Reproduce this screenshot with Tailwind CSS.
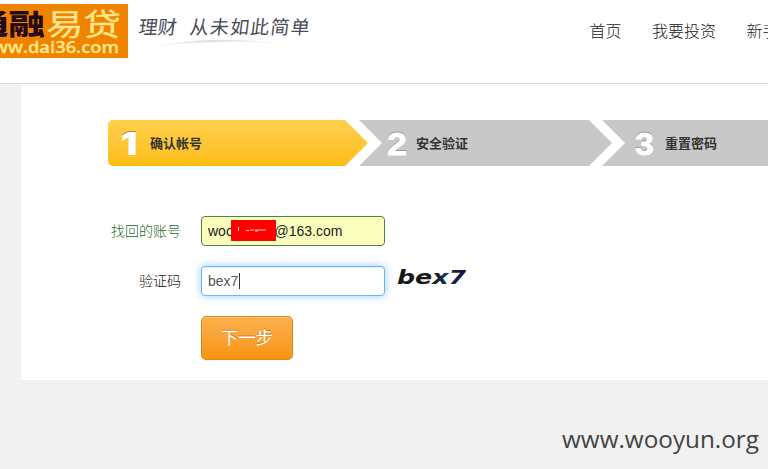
<!DOCTYPE html>
<html lang="zh-CN">
<head>
<meta charset="utf-8">
<title>找回密码</title>
<script src="https://cdn.jsdelivr.net/npm/@tailwindcss/browser@4"></script>
</head>
<body class="w-[768px] h-[469px] overflow-hidden bg-[#f1f1f1] font-['Liberation_Sans','Noto_Sans_CJK_SC',sans-serif] text-[#444]">
<header class="flex h-[84px] w-[768px] overflow-hidden border-b border-[#dcdcdc] bg-white">
  <svg class="mt-1 h-[54px] w-32 shrink-0" viewBox="0 0 128 54">
    <rect width="128" height="54" fill="#f08300"/>
    <g font-family="'Noto Sans CJK SC', sans-serif">
      <text x="-28" y="31" font-size="34" font-weight="900" fill="#260a14" textLength="73" lengthAdjust="spacingAndGlyphs" transform="translate(0 5) scale(1 .84)">通融</text>
      <text x="46" y="31" font-size="35" font-weight="400" fill="#ffe68c" stroke="#ffe68c" stroke-width=".4" textLength="75" lengthAdjust="spacingAndGlyphs" transform="translate(0 5) scale(1 .84)">易贷</text>
    </g>
    <text x="-22" y="49" font-family="'Open Sans', sans-serif" font-size="17" font-weight="600" fill="#ffe68c" stroke="#ffe68c" stroke-width=".3" textLength="141" lengthAdjust="spacingAndGlyphs">www.dai36.com</text>
  </svg>
  <svg class="h-[60px] w-[200px] shrink-0" viewBox="128 0 200 60">
    <defs><linearGradient id="swoosh"><stop stop-color="#fff"/><stop offset=".5" stop-color="#ddd"/><stop offset="1" stop-color="#fff"/></linearGradient></defs>
    <path d="M145 48Q211 34 285 44Q211 38 145 48Z" fill="url(#swoosh)"/>
    <g font-family="'Noto Sans CJK SC', sans-serif" font-size="19" font-weight="400" fill="#4a4c58">
      <text transform="translate(138 33.500) skewX(-7)" textLength="38" lengthAdjust="spacingAndGlyphs">理财</text>
      <text transform="translate(189 33.500) skewX(-7)" textLength="120" lengthAdjust="spacing">从未如此简单</text>
    </g>
  </svg>
  <nav class="ml-[261.5px] flex shrink-0 gap-[30.5px] pt-5 text-[16px] leading-6 font-light whitespace-nowrap text-[#222]">
    <a>首页</a><a>我要投资</a><a>新手指引</a>
  </nav>
</header>

<main class="ml-[21px] h-[296px] overflow-hidden bg-white pt-9 pl-[87px]">
  <ol class="flex h-[46px] w-[800px] text-[#333]">
    <li class="flex w-[260px] shrink-0 items-center rounded-l-[5px] bg-linear-to-b from-[#ffd04d] to-[#fdbd0c] [clip-path:polygon(0_0,237px_0,260px_50%,237px_100%,0_100%)]">
      <svg class="h-[46px] w-[42px]" viewBox="0 0 42 46"><text x="12.500" y="35" font-family="Inter, sans-serif" font-size="32" font-weight="900" fill="#fff" textLength="17" lengthAdjust="spacingAndGlyphs" class="[filter:drop-shadow(0_-1px_0_#b58a20)]">1</text></svg>
      <span class="font-['Noto_Sans_CJK_SC'] text-[13px] leading-5 font-bold">确认帐号</span>
    </li>
    <li class="-ml-[9px] flex w-[253px] shrink-0 items-center bg-[#c8c8c8] [clip-path:polygon(0_0,230px_0,253px_50%,230px_100%,0_100%,23px_50%)]">
      <svg class="h-[46px] w-[57px]" viewBox="0 0 57 46"><text x="28" y="35" font-family="'Liberation Sans', sans-serif" font-size="32" font-weight="700" fill="#fff" stroke="#fff" stroke-width="1" textLength="20" lengthAdjust="spacingAndGlyphs" class="[filter:drop-shadow(0_-1px_0_#999)]">2</text></svg>
      <span class="font-['Noto_Sans_CJK_SC'] text-[13px] leading-5 font-bold">安全验证</span>
    </li>
    <li class="-ml-[10px] flex w-[260px] shrink-0 items-center bg-[#c8c8c8] [clip-path:polygon(0_0,100%_0,100%_100%,0_100%,23px_50%)]">
      <svg class="h-[46px] w-[63px]" viewBox="0 0 63 46"><text x="33" y="35" font-family="'Liberation Sans', sans-serif" font-size="32" font-weight="700" fill="#fff" stroke="#fff" stroke-width="1" textLength="19" lengthAdjust="spacingAndGlyphs" class="[filter:drop-shadow(0_-1px_0_#999)]">3</text></svg>
      <span class="font-['Noto_Sans_CJK_SC'] text-[13px] leading-5 font-bold">重置密码</span>
    </li>
  </ol>

  <form class="mt-[50px] flex flex-col gap-5 text-[14px]">
    <div class="flex h-[30px] items-center">
      <label class="w-[73px] text-right font-light whitespace-nowrap text-[#1f6a24]">找回的账号</label>
      <div class="ml-5 flex h-[30px] w-[184px] items-center rounded-[4px] border border-[#468847] bg-[#faffbd] pl-1.5 text-[#222]">
        <span class="w-[23px] whitespace-nowrap">woo</span>
        <svg class="-mt-px h-[21px] w-[45px] shrink-0" viewBox="0 0 45 21"><path fill="#f00" d="M0 0h45v21H0z"/><path d="M7.500 7v4M15 10.500h3m1-.5h4m1 0h11M24 11h3" stroke="#fff" stroke-width="1" opacity=".85"/></svg>
        <span class="-ml-[1.5px]">@163.com</span>
      </div>
    </div>
    <div class="flex h-[30px] items-center">
      <label class="w-[73px] text-right font-light text-[#111]">验证码</label>
      <div class="ml-5 flex h-[30px] w-[184px] items-center rounded-[4px] border border-[#75b5e6] bg-white pl-1.5 text-[#555] shadow-[inset_0_1px_1px_rgba(0,0,0,.075),0_0_8px_rgba(82,168,236,.6)]">bex7<span class="ml-px h-4 w-px bg-[#333]"></span></div>
      <svg class="ml-2.5 h-[30px] w-20" viewBox="395 266 80 30"><defs><linearGradient id="ink"><stop stop-color="#161616"/><stop offset=".5" stop-color="#171717"/><stop offset=".7" stop-color="#142f58"/><stop offset="1" stop-color="#130d35"/></linearGradient></defs><text x="397" y="284" font-family="'DejaVu Sans', sans-serif" font-size="19" font-style="italic" font-weight="700" fill="url(#ink)" textLength="69" lengthAdjust="spacingAndGlyphs">bex7</text></svg>
    </div>
    <button type="button" class="ml-[93px] h-11 w-[92px] rounded-[5px] border border-[#d68a22] bg-linear-to-b from-[#fbb04c] to-[#f89406] text-[17.5px] leading-6 text-white shadow-[inset_0_1px_0_rgba(255,255,255,.2),0_1px_2px_rgba(0,0,0,.05)] [text-shadow:0_-1px_0_rgba(0,0,0,.25)]">下一步</button>
  </form>
</main>
<footer class="flex h-[89px] justify-end pt-[42px] pr-2">
  <svg class="h-10 w-[200px]" viewBox="0 0 200 40"><text x="2" y="26" font-family="'Open Sans', sans-serif" font-size="24" fill="#444" textLength="197" lengthAdjust="spacingAndGlyphs">www.wooyun.org</text></svg>
</footer>
</body>
</html>
